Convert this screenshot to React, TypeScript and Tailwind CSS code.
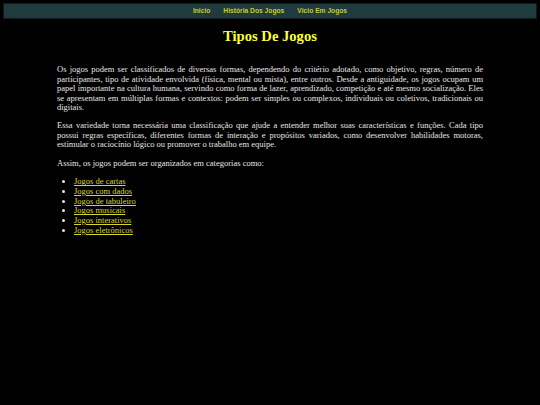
export default function App() {
  const categorias = [
    'Jogos de cartas',
    'Jogos com dados',
    'Jogos de tabuleiro',
    'Jogos musicais',
    'Jogos interativos',
    'Jogos eletrônicos',
  ];

  return (
    <div className="min-h-screen bg-black p-[3px] font-['Liberation_Serif',serif] text-[#e6e6e6]">
      <nav className="flex h-4 items-center justify-center gap-[13px] border border-[#111a1b] bg-[#1f3b3e] font-['Liberation_Sans',Arial,sans-serif] text-[6.7px] font-bold text-[#c9cc2a]">
        <a href="#">Inicio</a>
        <a href="#">História Dos Jogos</a>
        <a href="#">Vício Em Jogos</a>
      </nav>

      <main className="px-[54px]">
        <h1 className="mt-[9px] text-center text-[14.6px] leading-[17px] font-bold text-[#ffff33]">Tipos De Jogos</h1>

        <div className="mt-[20px] text-justify text-[8.5px] leading-[9.6px]">
          <p>
            Os jogos podem ser classificados de diversas formas, dependendo do critério adotado, como objetivo, regras,
            número de participantes, tipo de atividade envolvida (física, mental ou mista), entre outros. Desde a
            antiguidade, os jogos ocupam um papel importante na cultura humana, servindo como forma de lazer,
            aprendizado, competição e até mesmo socialização. Eles se apresentam em múltiplas formas e contextos:
            podem ser simples ou complexos, individuais ou coletivos, tradicionais ou digitais.
          </p>
          <p className="mt-[8px]">
            Essa variedade torna necessária uma classificação que ajude a entender melhor suas características e
            funções. Cada tipo possui regras específicas, diferentes formas de interação e propósitos variados, como
            desenvolver habilidades motoras, estimular o raciocínio lógico ou promover o trabalho em equipe.
          </p>
          <p className="mt-[9px]">Assim, os jogos podem ser organizados em categorias como:</p>
          <ul className="mt-[9px] list-disc pl-[17px] leading-[9.7px] marker:text-[#e6e6e6]">
            {categorias.map((c) => (
              <li key={c}>
                <a href="#" className="text-[#d6d62a] underline">
                  {c}
                </a>
              </li>
            ))}
          </ul>
        </div>
      </main>
    </div>
  );
}
